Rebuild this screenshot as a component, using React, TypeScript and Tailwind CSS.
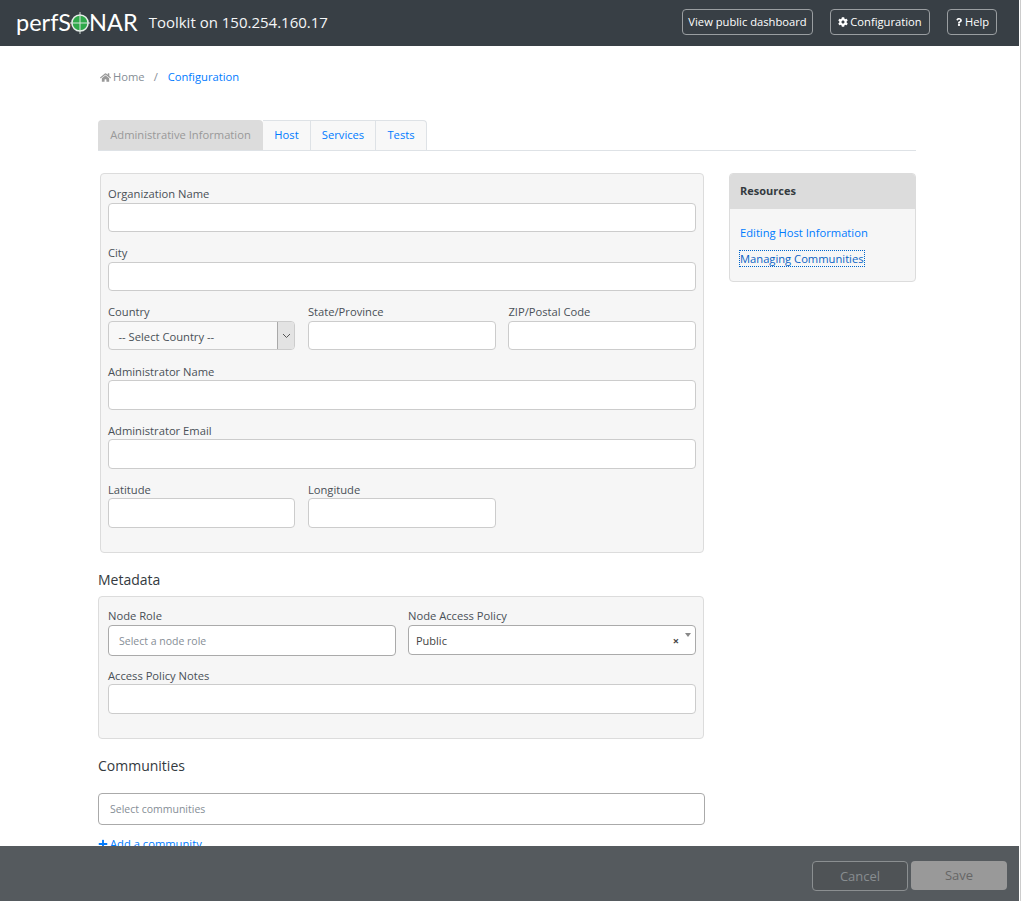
import { FaCog, FaHome, FaPlus, FaQuestion } from "react-icons/fa"

const font = { fontFamily: '"Open Sans", sans-serif' }

function Logo() {
  return (
    <div className="flex items-center text-[23.5px] leading-none text-white font-['Lato',sans-serif]">
      <span>perfS</span>
      <svg width="20" height="26" viewBox="0 0 21 26" className="mx-[-1px]">
        <circle cx="10.5" cy="13" r="8.5" fill="#2fa84a" stroke="#e8eeea" strokeWidth="1.6" />
        <path d="M10.5 1.5V24.5M0 13H21" stroke="#dfe8e2" strokeWidth="1" />
      </svg>
      <span>NAR</span>
    </div>
  )
}

function HeaderButton({ children, className }: { children: React.ReactNode; className: string }) {
  return (
    <button className={"flex h-[26px] items-center justify-center rounded-[4px] border border-[#9a9ea1] text-[11.2px] text-white " + className}>
      {children}
    </button>
  )
}

function Field({ label, className = "" }: { label: string; className?: string }) {
  return (
    <div className={"mb-[12.18px] " + className}>
      <label className="block h-[17.5px] text-[11.2px] leading-[17.5px] text-[#495057]">{label}</label>
      <div className="h-[29.5px] rounded-[4px] border border-[#ccc] bg-white" />
    </div>
  )
}

export default function App() {
  return (
    <div className="relative h-[901px] w-full overflow-hidden border-r border-[#ccc] bg-white" style={font}>
      <header className="mr-[1px] flex h-[46px] items-center bg-[#383f45] pl-[16px] pr-[22px]">
        <Logo />
        <span className="ml-[11px] pb-[1px] text-[15px] text-[#f4f6f7]">Toolkit on 150.254.160.17</span>
        <div className="ml-auto flex gap-[17px] pb-[2px]">
          <HeaderButton className="w-[131px]">View public dashboard</HeaderButton>
          <HeaderButton className="w-[100px] gap-[2px]">
            <FaCog className="text-[10px]" /> Configuration
          </HeaderButton>
          <HeaderButton className="w-[50px] gap-[2px]">
            <FaQuestion className="text-[8px]" /> Help
          </HeaderButton>
        </div>
      </header>

      <main className="ml-[98px] w-[818px]">
        <nav className="flex h-[62px] items-center pl-[2px] text-[11.2px]">
          <FaHome className="mr-[2px] text-[11px] text-[#999]" />
          <span className="text-[#868e96]">Home</span>
          <span className="mx-[9px] text-[#868e96]">/</span>
          <a className="ml-[1px] text-[#007bff]">Configuration</a>
        </nav>

        <div className="mt-[12px] flex h-[31px] border-b border-[#dee2e6] text-[11.2px]">
          <div className="flex w-[165px] items-center justify-center rounded-t-[4px] bg-[#dcdcdc] text-[#999]">Administrative Information</div>
          <div className="flex w-[48px] items-center justify-center border-r border-t border-[#dee2e6] bg-[#f8f8f8] text-[#007bff]">Host</div>
          <div className="flex w-[65px] items-center justify-center border-r border-t border-[#dee2e6] bg-[#f8f8f8] text-[#007bff]">Services</div>
          <div className="flex w-[51px] items-center justify-center rounded-tr-[4px] border-r border-t border-[#dee2e6] bg-[#f8f8f8] text-[#007bff]">Tests</div>
        </div>

        <div className="mt-[22px] flex">
          <div className="w-[607px]">
            <section className="ml-[2px] h-[380px] w-[604px] rounded-[4px] border border-[#dcdcdc] bg-[#f6f6f6] px-[7px] pt-[11px]">
              <Field label="Organization Name" />
              <Field label="City" />
              <div className="grid grid-cols-[187.4px_188px_187.6px] gap-x-[12.5px]">
                <div className="mb-[12.18px]">
                  <label className="block h-[17.5px] text-[11.2px] leading-[17.5px] text-[#495057]">Country</label>
                  <div className="flex h-[29.5px] items-stretch overflow-hidden rounded-[4px] border border-[#ccc] bg-[#f8f8f8]">
                    <span className="flex-1 pl-[9.5px] text-[11.2px] leading-[29px] text-[#495057]">-- Select Country --</span>
                    <span className="flex w-[17px] items-center justify-center border-l border-[#a9a9a9] bg-[#e3e3e3]">
                      <svg width="9" height="6" viewBox="0 0 9 6" fill="none" stroke="#555" strokeWidth="1">
                        <path d="M1 1L4.5 4.5L8 1" />
                      </svg>
                    </span>
                  </div>
                </div>
                <Field label="State/Province" />
                <Field label="ZIP/Postal Code" />
                <Field label="Administrator Name" className="col-span-3" />
                <Field label="Administrator Email" className="col-span-3" />
                <Field label="Latitude" />
                <Field label="Longitude" />
              </div>
            </section>

            <h2 className="mt-[17px] text-[14px] leading-[20px] text-[#343a40]">Metadata</h2>
            <section className="mt-[6px] h-[143px] w-[606px] rounded-[4px] border border-[#dcdcdc] bg-[#f6f6f6] pl-[9px] pr-[7px] pt-[10px]">
              <div className="grid grid-cols-2 gap-x-[12px]">
                <div className="mb-[11.75px]">
                  <label className="block h-[18px] text-[11.2px] leading-[18px] text-[#495057]">Node Role</label>
                  <div className="h-[30.5px] rounded-[4px] border border-[#aaa] bg-white pl-[10px] text-[10.5px] leading-[30px] text-[#868e96]">Select a node role</div>
                </div>
                <div className="mb-[11.75px]">
                  <label className="block h-[18px] text-[11.2px] leading-[18px] text-[#495057]">Node Access Policy</label>
                  <div className="relative flex h-[29.5px] items-center rounded-[4px] border border-[#aaa] bg-white pl-[7px] pt-[2px] text-[11px] text-[#444]">
                    Public
                    <span className="absolute right-[16px] top-[8px] text-[11px] font-bold leading-[14px] text-[#444]">×</span>
                    <span className="absolute right-[4px] top-[7px] h-0 w-0 border-x-[3.5px] border-t-[4px] border-x-transparent border-t-[#888]" />
                  </div>
                </div>
                <div className="col-span-2">
                  <label className="block h-[17px] text-[11.2px] leading-[18px] text-[#495057]">Access Policy Notes</label>
                  <div className="h-[30px] rounded-[4px] border border-[#ccc] bg-white" />
                </div>
              </div>
            </section>

            <h2 className="mt-[17px] text-[14px] leading-[20px] text-[#343a40]">Communities</h2>
            <div className="mt-[17px] h-[32px] rounded-[4px] border border-[#aaa] bg-white pl-[11px] text-[10.5px] leading-[30px] text-[#868e96]">Select communities</div>
            <a className="mt-[11px] flex items-center gap-[2px] text-[11.2px] text-[#007bff]">
              <FaPlus className="text-[10px]" /> Add a community
            </a>
          </div>

          <aside className="ml-[24px] h-[109px] w-[187px] overflow-hidden rounded-[4px] border border-[#dcdcdc] bg-[#f6f6f6]">
            <div className="flex h-[35px] items-center bg-[#dcdcdc] pl-[10px] text-[11px] font-bold text-[#343a40]">Resources</div>
            <div className="flex flex-col items-start pl-[10px] pt-[15px] text-[11.2px] text-[#007bff]">
              <a className="leading-[18px]">Editing Host Information</a>
              <a className="mt-[9px] leading-[15px] text-[#0a62c4] outline-1 outline-dotted outline-[#0066cc]">Managing Communities</a>
            </div>
          </aside>
        </div>
      </main>

      <footer className="absolute bottom-0 left-0 right-[1px] flex h-[55px] items-start justify-end gap-[3px] bg-[#555a5e] pr-[12px] pt-[15px] text-[13px]">
        <button className="h-[30px] w-[96px] rounded-[4px] border border-[#8b8f91] bg-[#4f5356] pt-[1px] text-[#888d90]">Cancel</button>
        <button className="h-[29px] w-[96px] rounded-[4px] bg-[#999] pt-[1px] text-[#666]">Save</button>
      </footer>
    </div>
  )
}
